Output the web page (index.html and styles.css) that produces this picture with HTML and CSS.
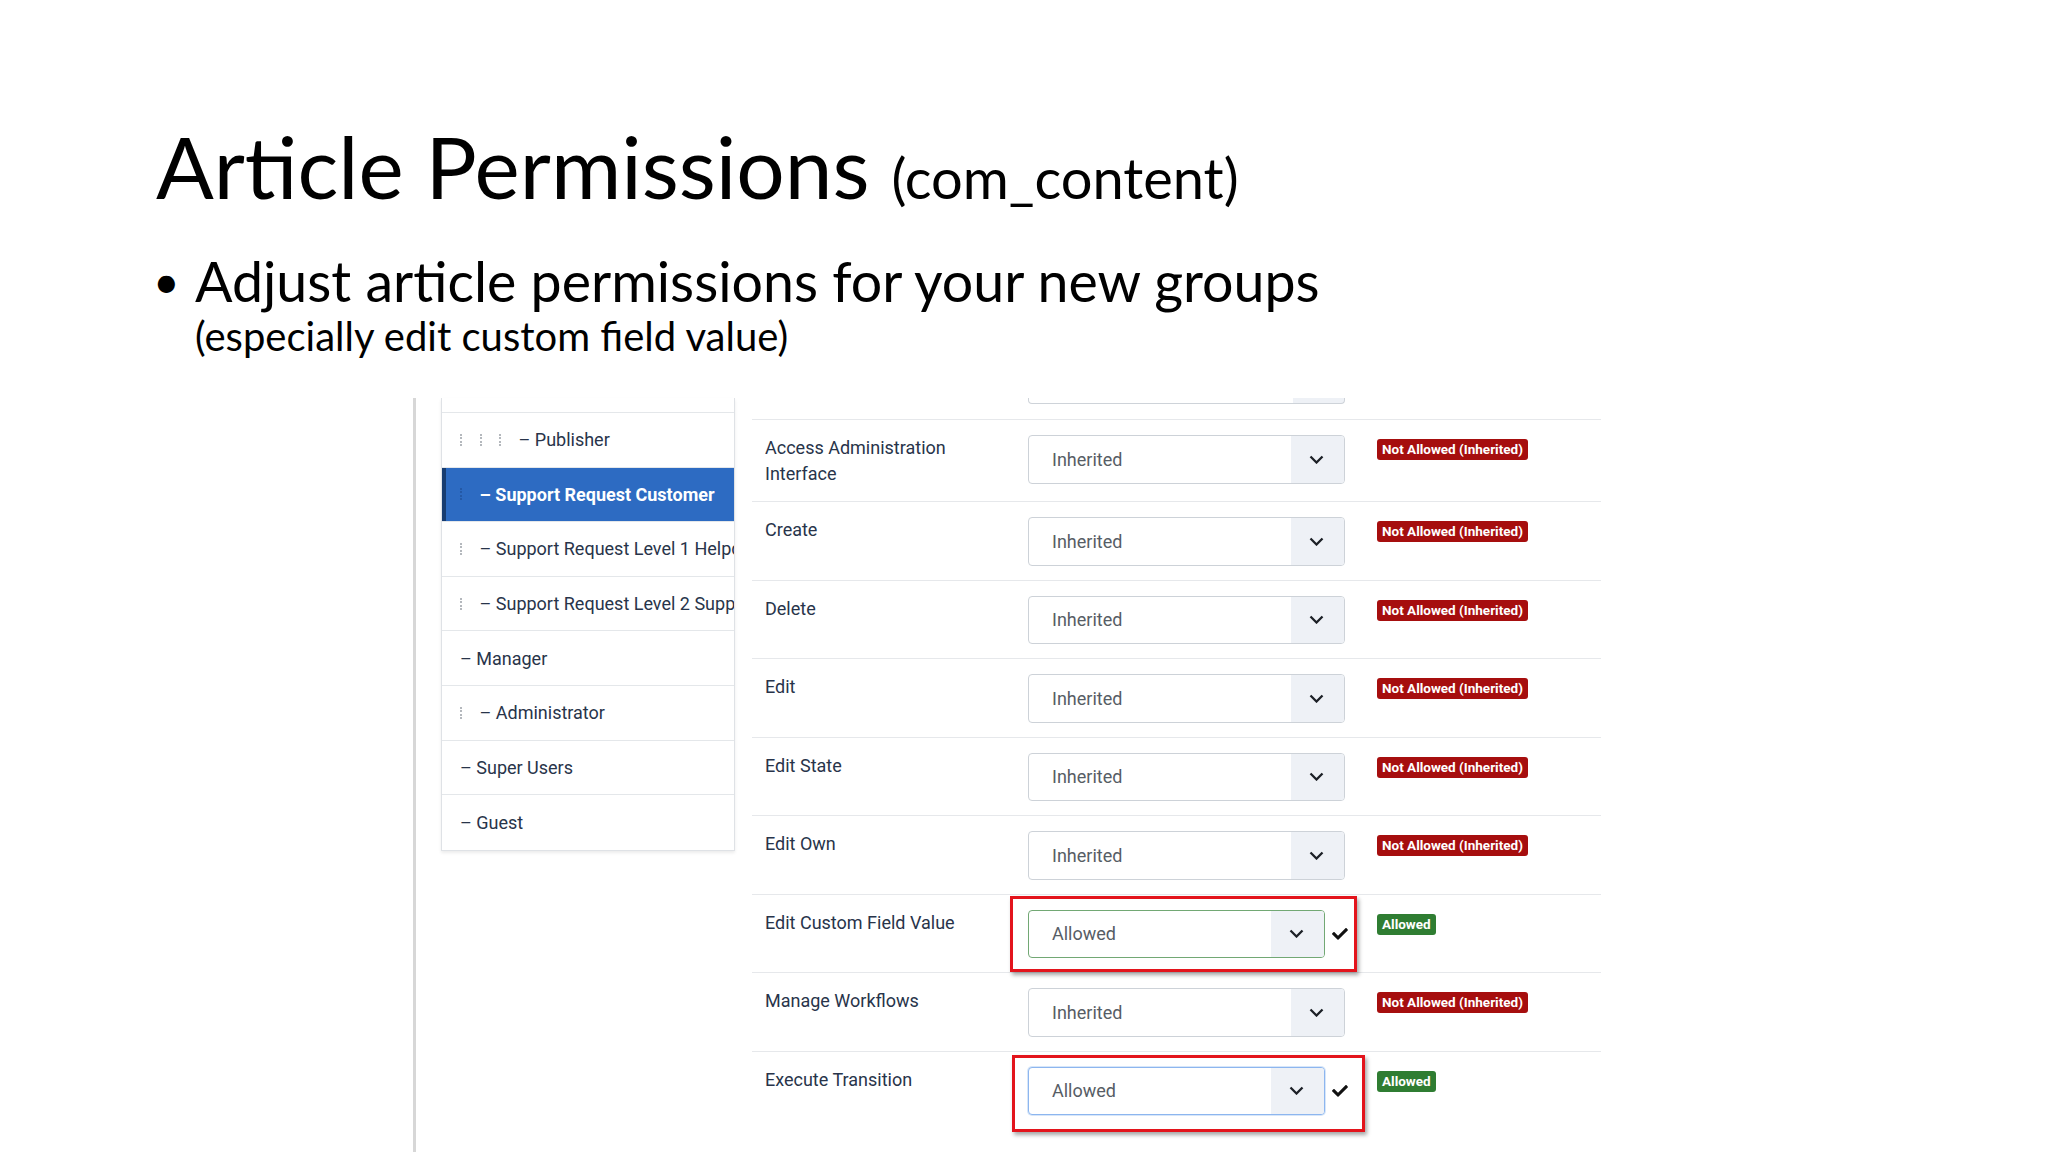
FILE: index.html
```html
<!DOCTYPE html>
<html>
<head>
<meta charset="utf-8">
<title>Article Permissions</title>
<link rel="stylesheet" href="styles.css">
</head>
<body>
<div class="slide">
  <h1 class="title">Article Permissions <span class="title-sub">(com_content)</span></h1>
  <ul class="points">
    <li class="point">
      <span class="bullet">•</span>
      <div class="point-body">
        <div class="point-main">Adjust article permissions for your new groups</div>
        <div class="point-sub">(especially edit custom field value)</div>
      </div>
    </li>
  </ul>

  <div class="shot">
    <div class="groups">
      <div class="group-stub"></div>
      <div class="group"><span class="ind"></span><span class="ind"></span><span class="ind"></span><span class="name">– Publisher</span></div>
      <div class="group active"><span class="ind"></span><span class="name">– Support Request Customer</span></div>
      <div class="group"><span class="ind"></span><span class="name">– Support Request Level 1 Helpdesk</span></div>
      <div class="group"><span class="ind"></span><span class="name">– Support Request Level 2 Support</span></div>
      <div class="group"><span class="name">– Manager</span></div>
      <div class="group"><span class="ind"></span><span class="name">– Administrator</span></div>
      <div class="group"><span class="name">– Super Users</span></div>
      <div class="group"><span class="name">– Guest</span></div>
    </div>

    <div class="perms">
      <div class="perm-stub"><div class="stub-select"></div></div>

      <div class="perm">
        <div class="label">Access Administration<br>Interface</div>
        <div class="cell"><div class="select"><span class="val">Inherited</span><span class="arrow"><svg width="15" height="9" viewBox="0 0 15 9"><polyline points="1.5,1.5 7.5,7.5 13.5,1.5" fill="none" stroke="#1c2026" stroke-width="2.3"/></svg></span></div></div>
        <span class="badge deny">Not Allowed (Inherited)</span>
      </div>

      <div class="perm">
        <div class="label">Create</div>
        <div class="cell"><div class="select"><span class="val">Inherited</span><span class="arrow"><svg width="15" height="9" viewBox="0 0 15 9"><polyline points="1.5,1.5 7.5,7.5 13.5,1.5" fill="none" stroke="#1c2026" stroke-width="2.3"/></svg></span></div></div>
        <span class="badge deny">Not Allowed (Inherited)</span>
      </div>

      <div class="perm">
        <div class="label">Delete</div>
        <div class="cell"><div class="select"><span class="val">Inherited</span><span class="arrow"><svg width="15" height="9" viewBox="0 0 15 9"><polyline points="1.5,1.5 7.5,7.5 13.5,1.5" fill="none" stroke="#1c2026" stroke-width="2.3"/></svg></span></div></div>
        <span class="badge deny">Not Allowed (Inherited)</span>
      </div>

      <div class="perm">
        <div class="label">Edit</div>
        <div class="cell"><div class="select"><span class="val">Inherited</span><span class="arrow"><svg width="15" height="9" viewBox="0 0 15 9"><polyline points="1.5,1.5 7.5,7.5 13.5,1.5" fill="none" stroke="#1c2026" stroke-width="2.3"/></svg></span></div></div>
        <span class="badge deny">Not Allowed (Inherited)</span>
      </div>

      <div class="perm">
        <div class="label">Edit State</div>
        <div class="cell"><div class="select"><span class="val">Inherited</span><span class="arrow"><svg width="15" height="9" viewBox="0 0 15 9"><polyline points="1.5,1.5 7.5,7.5 13.5,1.5" fill="none" stroke="#1c2026" stroke-width="2.3"/></svg></span></div></div>
        <span class="badge deny">Not Allowed (Inherited)</span>
      </div>

      <div class="perm">
        <div class="label">Edit Own</div>
        <div class="cell"><div class="select"><span class="val">Inherited</span><span class="arrow"><svg width="15" height="9" viewBox="0 0 15 9"><polyline points="1.5,1.5 7.5,7.5 13.5,1.5" fill="none" stroke="#1c2026" stroke-width="2.3"/></svg></span></div></div>
        <span class="badge deny">Not Allowed (Inherited)</span>
      </div>

      <div class="perm">
        <div class="label">Edit Custom Field Value</div>
        <div class="cell">
          <div class="select allowed ok"><span class="val">Allowed</span><span class="arrow"><svg width="15" height="9" viewBox="0 0 15 9"><polyline points="1.5,1.5 7.5,7.5 13.5,1.5" fill="none" stroke="#1c2026" stroke-width="2.3"/></svg></span></div>
          <svg class="check" width="16" height="13" viewBox="0 0 512 420"><path d="M173.9 407.4l-166.4-166.4c-10-10-10-26.2 0-36.2l36.2-36.2c10-10 26.2-10 36.2 0L192 280.7 432.1 40.6c10-10 26.2-10 36.2 0l36.2 36.2c10 10 10 26.2 0 36.2l-294.4 294.4c-10 10-26.2 10-36.2 0z" fill="#111"/></svg>
          <div class="redbox box-a"></div>
        </div>
        <span class="badge grant">Allowed</span>
      </div>

      <div class="perm">
        <div class="label">Manage Workflows</div>
        <div class="cell"><div class="select"><span class="val">Inherited</span><span class="arrow"><svg width="15" height="9" viewBox="0 0 15 9"><polyline points="1.5,1.5 7.5,7.5 13.5,1.5" fill="none" stroke="#1c2026" stroke-width="2.3"/></svg></span></div></div>
        <span class="badge deny">Not Allowed (Inherited)</span>
      </div>

      <div class="perm last">
        <div class="label">Execute Transition</div>
        <div class="cell">
          <div class="select allowed focus"><span class="val">Allowed</span><span class="arrow"><svg width="15" height="9" viewBox="0 0 15 9"><polyline points="1.5,1.5 7.5,7.5 13.5,1.5" fill="none" stroke="#1c2026" stroke-width="2.3"/></svg></span></div>
          <svg class="check" width="16" height="13" viewBox="0 0 512 420"><path d="M173.9 407.4l-166.4-166.4c-10-10-10-26.2 0-36.2l36.2-36.2c10-10 26.2-10 36.2 0L192 280.7 432.1 40.6c10-10 26.2-10 36.2 0l36.2 36.2c10 10 10 26.2 0 36.2l-294.4 294.4c-10 10-26.2 10-36.2 0z" fill="#111"/></svg>
          <div class="redbox box-b"></div>
        </div>
        <span class="badge grant">Allowed</span>
      </div>
    </div>
  </div>
</div>
</body>
</html>
```

FILE: styles.css
```css
html, body {
  margin: 0;
  padding: 0;
  background: #ffffff;
}

body {
  width: 2048px;
  height: 1152px;
  overflow: hidden;
}

.slide {
  box-sizing: border-box;
  width: 2048px;
  height: 1152px;
  padding: 123px 0 0 156px;
  font-family: Lato, "Open Sans", sans-serif;
  color: #000;
}

.title {
  margin: 0;
  height: 87px;
  font-family: Lato, sans-serif;
  font-weight: 400;
  font-size: 85.5px;
  line-height: 87px;
  white-space: nowrap;
}

.title-sub {
  font-size: 56px;
  line-height: 56px;
  margin-left: 0;
}

.points {
  list-style: none;
  margin: 43px 0 0 0;
  padding: 0;
}

.point {
  display: grid;
  grid-template-columns: 39px auto;
}

.bullet {
  margin-left: -3px;
  font-size: 46px;
  line-height: 56px;
}

.point-main {
  font-size: 55.5px;
  line-height: 56px;
  white-space: nowrap;
}

.point-sub {
  margin-top: 7px;
  font-size: 40px;
  line-height: 40px;
  white-space: nowrap;
}

/* ---------- screenshot area ---------- */

.shot {
  margin: 42px 0 0 257px;
  height: 760px;
  border-left: 3px solid #d7d7d7;
  padding-left: 25px;
  display: flex;
  align-items: flex-start;
  gap: 17px;
  font-family: Roboto, "Liberation Sans", sans-serif;
}

.groups {
  width: 294px;
  box-sizing: border-box;
  border: 1px solid #dfe2e6;
  border-top: none;
  box-shadow: 0 2px 3px rgba(0, 0, 0, 0.08);
  background: #fff;
}

.group-stub {
  height: 14px;
  border-bottom: 1px solid #e4e7ea;
}

.group {
  box-sizing: border-box;
  height: 54.6px;
  border-bottom: 1px solid #e4e7ea;
  display: flex;
  align-items: center;
  padding-left: 18px;
  font-size: 18px;
  color: #28344a;
  white-space: nowrap;
  overflow: hidden;
}

.group:last-child {
  border-bottom: none;
}

.group.active {
  background: #2d6bc2;
  color: #fff;
  font-weight: 700;
  box-shadow: inset 4px 0 0 #173c70;
}

.ind {
  display: inline-block;
  flex: none;
  width: 19.5px;
  height: 12px;
  box-sizing: border-box;
  border-left: 2px dotted #b4b8bd;
}

.group.active .ind {
  border-left-color: #2459a6;
}

.name {
  flex: none;
}

/* permissions table */

.perms {
  width: 849px;
}

.perm-stub {
  height: 21px;
  border-bottom: 1px solid #e6e8eb;
  padding-left: 276px;
}

.stub-select {
  width: 317px;
  height: 6px;
  box-sizing: border-box;
  border: 1px solid #ced3d9;
  border-top: none;
  border-radius: 0 0 4px 4px;
  background: linear-gradient(to right, #fff 264px, #eef1f6 264px);
}

.perm {
  display: grid;
  grid-template-columns: 263px 349px auto;
  align-items: start;
  padding: 15px 0 14px 13px;
  border-bottom: 1px solid #e6e8eb;
}

.perm.last {
  border-bottom: none;
}

.label {
  font-size: 18px;
  line-height: 26px;
  color: #28344a;
}

.cell {
  position: relative;
  display: flex;
  align-items: center;
  gap: 7px;
}

.select {
  box-sizing: border-box;
  width: 317px;
  height: 48.5px;
  border: 1px solid #cdd2d8;
  border-radius: 4px;
  background: #fff;
  display: flex;
  align-items: stretch;
  overflow: hidden;
}

.select.allowed {
  width: 297px;
}

.select.ok {
  border-color: #72a874;
}

.select.focus {
  border-color: #8db6ef;
  box-shadow: 0 0 0 1px rgba(141, 182, 239, 0.35);
}

.val {
  flex: 1;
  display: flex;
  align-items: center;
  padding-left: 23px;
  font-size: 18px;
  color: #575d65;
}

.arrow {
  width: 53px;
  flex: none;
  background: #eef1f6;
  display: flex;
  align-items: center;
  justify-content: center;
  padding-right: 3px;
  box-sizing: border-box;
}

.check {
  flex: none;
}

.badge {
  justify-self: start;
  margin-top: 4px;
  padding: 0 5px;
  border-radius: 3px;
  font-size: 13.5px;
  font-weight: 700;
  line-height: 21px;
  color: #fff;
  white-space: nowrap;
}

.badge.deny {
  background: #a60e0e;
}

.badge.grant {
  background: #2f7d32;
}

.redbox {
  position: absolute;
  border: 3px solid #e3141c;
  box-shadow: 2px 3px 4px rgba(0, 0, 0, 0.35);
  pointer-events: none;
}

.box-a {
  left: -18px;
  top: -14px;
  width: 341px;
  height: 70px;
}

.box-b {
  left: -16px;
  top: -12px;
  width: 347px;
  height: 71px;
}
```
